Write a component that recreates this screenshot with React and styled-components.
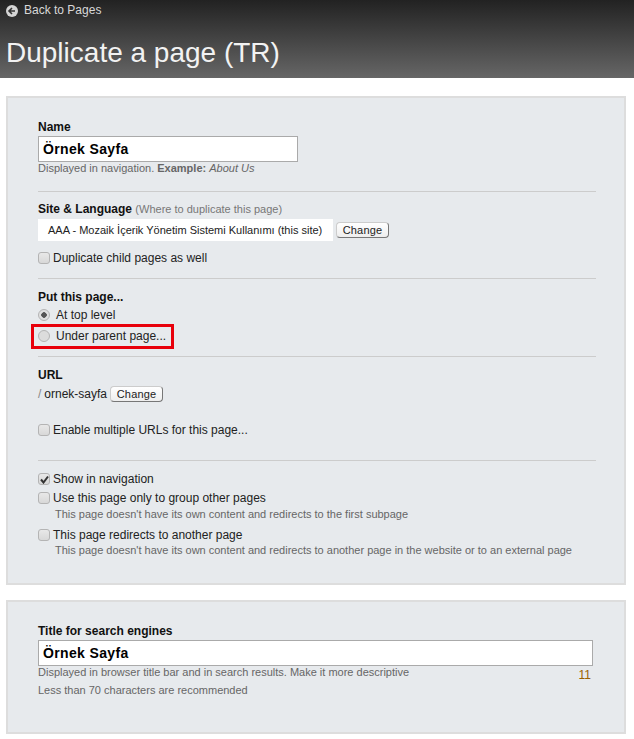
import React from "react";
import styled, { createGlobalStyle } from "styled-components";

const Global = createGlobalStyle`
  html, body { margin: 0; padding: 0; background: #fff; }
  body { font-family: "Liberation Sans", Arial, sans-serif; font-size: 12px; color: #222; }
`;
const Page = styled.div`width: 634px; height: 739px; overflow: hidden;`;
const Header = styled.header`
  height: 78px; box-sizing: border-box; padding: 2px 6px 0;
  background: linear-gradient(#222222, #666666);
`;
const BackLink = styled.a`
  display: flex; align-items: center; gap: 6px; height: 16px;
  color: #d8d8d8; font-size: 12px;
`;
const BackIcon = styled.svg`width: 12px; height: 12px; display: block; margin-top: 1px;`;
const Title = styled.h1`
  margin: 17px 0 0; font-size: 28px; line-height: 36px; font-weight: 400; color: #f2f2f2;
`;
const Panel = styled.section`
  box-sizing: border-box; width: 620px; margin: ${p => p.$top}px 0 0 6px; height: ${p => p.$h}px;
  padding: ${p => p.$pad}px 30px 0 30px;
  background: #e7eaed; border: 2px solid #dddddd;
`;
const Label = styled.div`
  font-weight: 700; font-size: 12px; line-height: 14px; color: #111; margin-top: ${p => p.$top || 0}px;
`;
const Muted = styled.span`font-weight: 400; font-size: 11px; color: #777;`;
const TextInput = styled.div`
  box-sizing: border-box; width: ${p => p.$w}px; height: 26px; margin-top: 2px;
  background: #fff; border: 1px solid #aaaaaa; padding: 0 4px;
  font-weight: 700; font-size: 14px; line-height: 24px; letter-spacing: 0.35px; color: #000;
`;
const Hint = styled.div`
  font-size: 11px; line-height: 13px; color: #666; margin-top: ${p => p.$top || 0}px;
  padding-left: ${p => p.$left || 0}px;
  & b { font-weight: 700; }
`;
const Divider = styled.hr`
  border: 0; height: 1px; background: #cccccc; margin: ${p => p.$top}px 0 0; width: 558px;
`;
const SiteRow = styled.div`display: flex; align-items: center; gap: 3px; margin-top: 3px;`;
const SiteName = styled.div`
  width: 295px; height: 22px; box-sizing: border-box; background: #fff; padding-left: 10px;
  font-size: 11px; line-height: 22px; color: #222; white-space: nowrap;
`;
const ChangeButton = styled.button`
  width: 53px; height: 16px; padding: 0; font: 11px/13px "Liberation Sans", Arial, sans-serif; color: #222;
  letter-spacing: 0.2px;
  background: linear-gradient(#ffffff, #eeeeee); border: 1px solid #cccccc;
  border-right-color: #777; border-bottom-color: #777; border-radius: 4px; box-sizing: border-box;
`;
const CheckRow = styled.label`
  display: flex; align-items: center; gap: 3px; height: 14px; line-height: 14px; font-size: 12px; color: #222;
  margin-top: ${p => p.$top || 0}px;
`;
const Box = styled.span`
  width: 12px; height: 12px; box-sizing: border-box; border: 1px solid #b4b4b4; border-radius: 3px;
  background: linear-gradient(#e8e8e8, #d8d8d8); display: flex; align-items: center; justify-content: center;
`;
const RadioRow = styled.label`
  display: flex; align-items: center; gap: 6px; height: 18px; font-size: 12px; color: #222;
  margin-top: ${p => p.$top || 0}px;
`;
const Radio = styled.span`
  width: 12px; height: 12px; box-sizing: border-box; border: 1px solid #b4b4b4; border-radius: 50%;
  background: ${p => p.$on ? "radial-gradient(circle, #555 0 2.5px, #e0e0e0 3px)" : "#dcdcdc"};
`;
const Highlighted = styled.div`
  position: relative;
  &::after {
    content: ""; position: absolute; left: -7px; top: -3px; width: 143px; height: 25px; box-sizing: border-box;
    border: 3px solid #e8000b;
  }
`;
const UrlRow = styled.div`display: flex; align-items: center; gap: 3px; margin-top: 4px; font-size: 12px; color: #222;`;
const Slash = styled.span`color: #888;`;
const HintRow = styled.div`display: flex; justify-content: space-between; padding-right: 3px;`;
const Counter = styled.span`
  font-size: 12px; line-height: 14px; margin-top: 2px; color: #9a6000;
`;

const Check = () => (
  <svg width="9" height="9" viewBox="0 0 9 9"><path d="M1 4.5 L3.5 7.5 L8 1.5" fill="none" stroke="#333" strokeWidth="2" /></svg>
);

export default function App() {
  return (
    <Page>
      <Global />
      <Header>
        <BackLink>
          <BackIcon viewBox="0 0 12 12">
            <circle cx="6" cy="6" r="6" fill="#d5d5d5" />
            <path d="M6 3 L3 6 L6 9 M3.5 6 H9" fill="none" stroke="#333" strokeWidth="1.6" />
          </BackIcon>
          Back to Pages
        </BackLink>
        <Title>Duplicate a page (TR)</Title>
      </Header>
      <Panel $top={18} $h={489} $pad={22}>
        <Label>Name</Label>
        <TextInput $w={260}>Örnek Sayfa</TextInput>
        <Hint>Displayed in navigation. <b>Example:</b> <i>About Us</i></Hint>
        <Divider $top={16} />
        <Label $top={10}>Site &amp; Language <Muted>(Where to duplicate this page)</Muted></Label>
        <SiteRow>
          <SiteName>AAA - Mozaik İçerik Yönetim Sistemi Kullanımı (this site)</SiteName>
          <ChangeButton>Change</ChangeButton>
        </SiteRow>
        <CheckRow $top={10}><Box />Duplicate child pages as well</CheckRow>
        <Divider $top={13} />
        <Label $top={11}>Put this page...</Label>
        <RadioRow $top={2}><Radio $on />At top level</RadioRow>
        <Highlighted>
          <RadioRow $top={3}><Radio />Under parent page...</RadioRow>
        </Highlighted>
        <Divider $top={11} />
        <Label $top={11}>URL</Label>
        <UrlRow><Slash>/</Slash> ornek-sayfa <ChangeButton>Change</ChangeButton></UrlRow>
        <CheckRow $top={21}><Box />Enable multiple URLs for this page...</CheckRow>
        <Divider $top={23} />
        <CheckRow $top={11}><Box><Check /></Box>Show in navigation</CheckRow>
        <CheckRow $top={5}><Box />Use this page only to group other pages</CheckRow>
        <Hint $top={3} $left={17}>This page doesn't have its own content and redirects to the first subpage</Hint>
        <CheckRow $top={7}><Box />This page redirects to another page</CheckRow>
        <Hint $top={2} $left={17}>This page doesn't have its own content and redirects to another page in the website or to an external page</Hint>
      </Panel>
      <Panel $top={15} $h={134} $pad={22}>
        <Label>Title for search engines</Label>
        <TextInput $w={555}>Örnek Sayfa</TextInput>
        <HintRow>
          <Hint>Displayed in browser title bar and in search results. Make it more descriptive</Hint>
          <Counter>11</Counter>
        </HintRow>
        <Hint $top={2}>Less than 70 characters are recommended</Hint>
      </Panel>
    </Page>
  );
}
